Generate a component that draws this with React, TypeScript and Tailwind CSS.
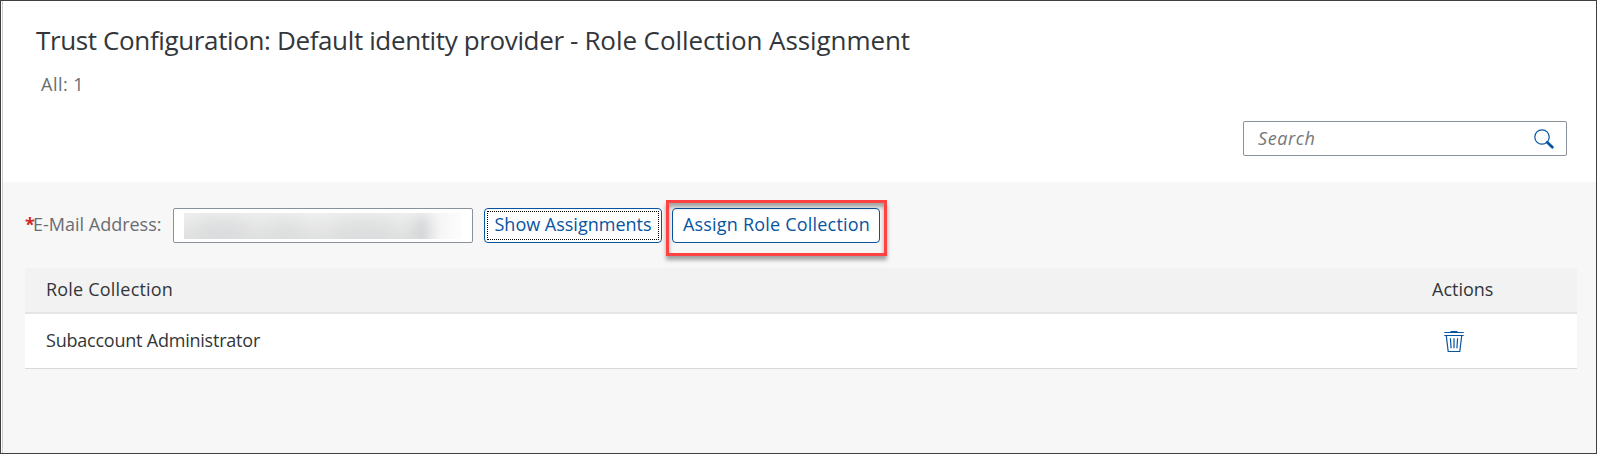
function SearchIcon() {
  return (
    <svg width="20" height="20" viewBox="0 0 20 20" fill="none" stroke="#0854a0">
      <circle cx="8" cy="8" r="7.2" strokeWidth="1.2" />
      <path d="M13.2 13.2 18.4 18.2" strokeWidth="2.7" strokeLinecap="round" />
    </svg>
  );
}

function DeleteIcon() {
  return (
    <svg width="20" height="22" viewBox="0 0 20 22" fill="none" stroke="#0854a0">
      <path d="M7 0h6l1 1H6z" fill="#0854a0" stroke="none" />
      <path d="M.3 1.5h19.4M.3 4.5h19.4" strokeWidth="1.1" />
      <path d="M2.3 4.8 4.2 20.5h11.6L17.7 4.8" strokeWidth="1.2" />
      <path d="M6.4 7.2 7.1 17.2M10 7.2v10M13.6 7.2 12.9 17.2" strokeWidth="1.2" />
    </svg>
  );
}

function RedactedValue() {
  return (
    <div className="relative h-[26px] w-[278px] overflow-hidden bg-linear-to-b from-[#efefef] to-[#e0e1e1]">
      <div className="absolute top-[6px] left-[12px] h-[22px] w-[52px] bg-[#cfd1d3] opacity-50 blur-[10px]" />
      <div className="absolute top-[6px] left-[84px] h-[22px] w-[34px] bg-[#cfd1d3] opacity-40 blur-[10px]" />
      <div className="absolute top-[6px] left-[150px] h-[22px] w-[60px] bg-[#cfd1d3] opacity-40 blur-[10px]" />
      <div className="absolute top-[6px] left-[230px] h-[22px] w-[22px] bg-[#c8cacd] opacity-70 blur-[8px]" />
      <div className="absolute inset-y-0 right-0 w-[40px] bg-linear-to-r from-transparent via-[#f7f7f7] via-50% to-[#fdfdfd]" />
    </div>
  );
}

export default function App() {
  return (
    <div className="flex h-[454px] w-[1597px] overflow-hidden border border-[#404040] bg-white pl-px font-['Open_Sans',sans-serif] text-[18px] leading-6 text-[#32363a]">
      <div className="flex flex-1 flex-col border-l border-[#d0cece]">
        <header className="flex h-[181px] shrink-0 flex-col">
          <h1 className="mt-[21px] ml-[33px] text-[26px] leading-9 tracking-[-0.37px] whitespace-nowrap">
            Trust Configuration: Default identity provider -{" "}
            <span className="tracking-[-0.08px]">Role Collection Assignment</span>
          </h1>
          <div className="mt-[14px] ml-[38px] tracking-[0.5px] text-[#6a6d70]">All: 1</div>
          <div className="mt-[25px] mr-[29px] flex h-[35px] w-[324px] items-center justify-between self-end rounded-[2px] border border-[#89919a] bg-white pr-[12px] pl-[14px]">
            <span className="-mt-px tracking-[0.6px] text-[#74777a] italic">Search</span>
            <SearchIcon />
          </div>
        </header>
        <main className="flex flex-1 flex-col bg-[#f7f7f7] pr-[19px] pl-[22px]">
          <div className="mt-[26px] flex h-[35px]">
            <label className="flex w-[148px] items-center pb-[3px] whitespace-nowrap text-[#6a6d70]">
              <span className="w-[8px] font-bold text-[#d02828]">*</span>
              E-Mail Address:
            </label>
            <div className="flex w-[300px] items-center rounded-[2px] border border-[#89919a] bg-white pl-[10px]">
              <RedactedValue />
            </div>
            <button className="ml-[11px] flex w-[178px] rounded-[4px] border border-[#0854a0] bg-white p-[2px] text-[#0854a0]">
              <span className="flex h-full w-full items-center justify-center border border-dotted border-black pb-[3px] whitespace-nowrap">
                Show Assignments
              </span>
            </button>
            <div className="relative ml-[10px] w-[208px]">
              <button className="flex h-full w-full items-center justify-center rounded-[4px] border border-[#0854a0] bg-white pb-[3px] pl-px tracking-[0.2px] whitespace-nowrap text-[#0854a0]">
                Assign Role Collection
              </button>
              <div className="pointer-events-none absolute -top-[8px] -left-[6px] h-[56px] w-[221px] border-[3px] border-[#ff4343] shadow-[0_4px_4px_rgba(0,0,0,0.35),inset_0_4px_4px_rgba(0,0,0,0.35)]" />
            </div>
          </div>
          <section className="mt-[25px] flex flex-col">
            <div className="flex h-[46px] items-center border-b-2 border-[#e5e5e5] bg-[#f2f2f2] pb-[2px] pl-[21px]">
              <span className="flex-1 tracking-[0.2px]">Role Collection</span>
              <span className="w-[145px]">Actions</span>
            </div>
            <div className="flex h-[55px] items-center border-b border-[#d9d9d9] bg-white pl-[21px]">
              <span className="flex-1 pb-[2px] tracking-[-0.22px]">Subaccount Administrator</span>
              <span className="w-[145px] pt-px pl-[12px]">
                <DeleteIcon />
              </span>
            </div>
          </section>
        </main>
      </div>
    </div>
  );
}
